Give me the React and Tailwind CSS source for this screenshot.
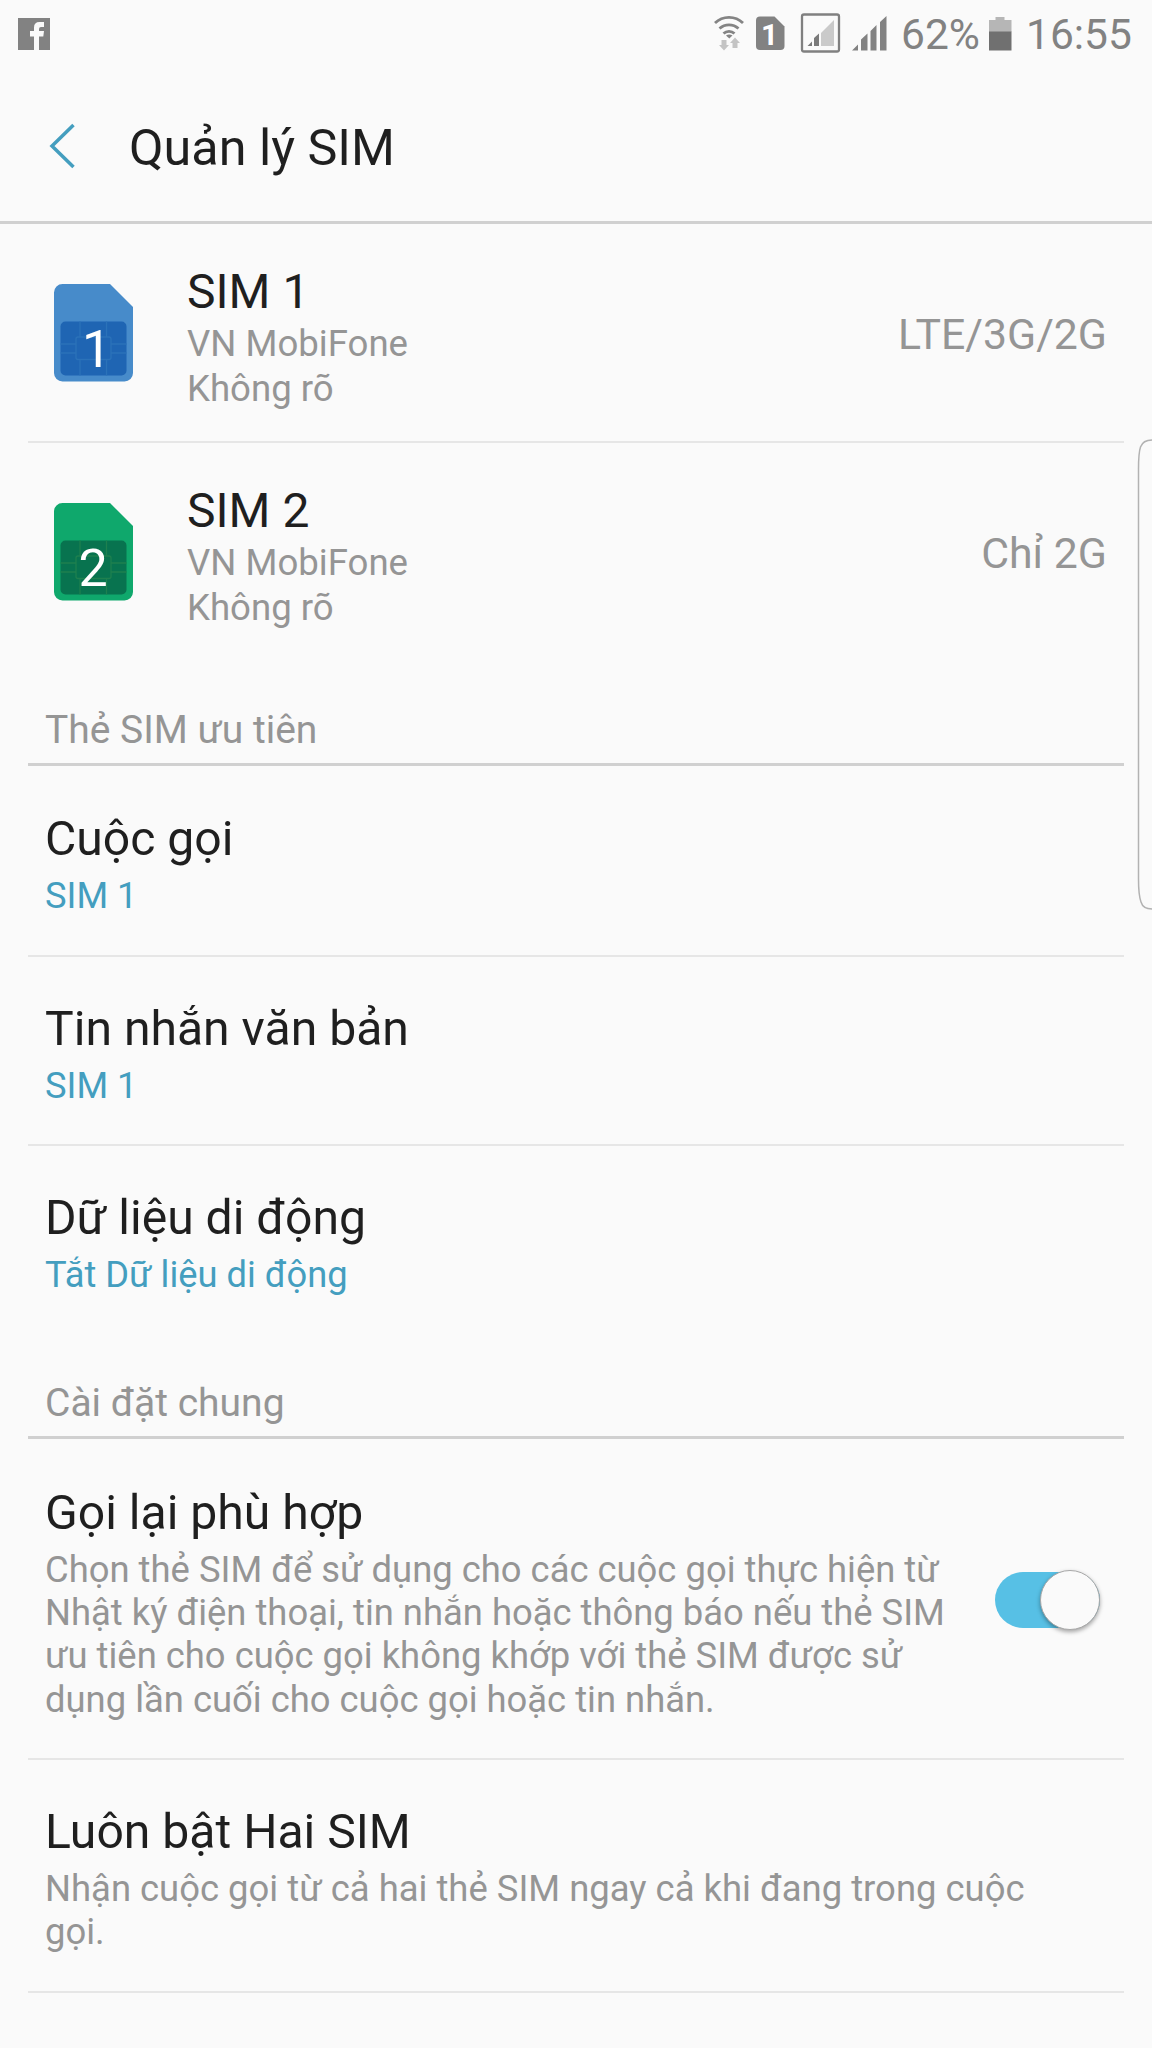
const Chip = ({ top, chip, line, n }) => (
  <svg width="80" height="98" viewBox="0 0 80 98">
    <path d="M8.500 0H56L79 23V89a8.500 8.500 0 0 1-8.500 8.500H8.500A8.500 8.500 0 0 1 0 89V8.500A8.500 8.500 0 0 1 8.500 0Z" fill={top} />
    <rect x="6.500" y="37.500" width="66" height="54" rx="5" fill={chip} />
    <g stroke={line} strokeWidth="1.300" fill="none">
      <path d="M26 37.500V53M52.500 37.500V53M26 75.500V91.500M52.500 75.500V91.500M6.500 60H22M6.500 69H22M57 60H72.500M57 69H72.500" />
      <rect x="22" y="53" width="35" height="22.500" rx="2" />
    </g>
    <text x={n === 1 ? 42.5 : 39} y="83" fontSize="52" fill="#fff" textAnchor="middle" className="font-['Roboto']">{n}</text>
  </svg>
)

const StatusIcons = () => (
  <svg width="182" height="60" viewBox="710 0 182 60" className="block">
    <g fill="none" stroke="#848484" strokeWidth="2.800">
      <path d="M715 23a20 20 0 0 1 28 0" />
      <path d="M719.500 28.500a14 14 0 0 1 19 0" />
      <path d="M723.500 33.500a8 8 0 0 1 11 0" />
    </g>
    <path d="M726 35.500q3-2 6.500 0l-3.200 3Z" fill="#848484" />
    <path d="M721.500 40h5v5h2.500l-5 5.500-5-5.500h2.500ZM732.500 48h5v-5h2.500l-5-5.500-5 5.500h2.500Z" fill="#c4c4c4" />
    <path d="M760 16.500h14.500l10 10V46a4 4 0 0 1-4 4H760a4 4 0 0 1-4-4V20.500a4 4 0 0 1 4-4Z" fill="#828282" />
    <text x="769.500" y="45" fontSize="30" fontWeight="700" fill="#fff" textAnchor="middle" className="font-['Roboto']">1</text>
    <rect x="802" y="14.500" width="37" height="37" rx="2" fill="none" stroke="#808080" strokeWidth="2.300" />
    <path d="M807.500 46l4.500-4.500V46ZM814 46v-8l5-4.500V46Z" fill="#7a7a7a" />
    <path d="M821 46V33l13-13v26Z" fill="#cacaca" />
    <path d="M852 50.500l6-6v6ZM861 50.500V39.500l6.500-6v17ZM870.500 50.500V31l6-6v25.500ZM880 50.500V22l6.500-6v34.500Z" fill="#828282" />
  </svg>
)

const preferred = [
  { title: 'Cuộc gọi', value: 'SIM 1' },
  { title: 'Tin nhắn văn bản', value: 'SIM 1' },
  { title: 'Dữ liệu di động', value: 'Tắt Dữ liệu di động' },
]

const sims = [
  { n: 1, type: 'LTE/3G/2G', top: '#478bca', chip: '#1f65b3', line: '#2b72b9' },
  { n: 2, type: 'Chỉ 2G', top: '#0fa86c', chip: '#08734f', line: '#1e804f' },
]

function SectionTitle({ children }) {
  return (
    <h2 className="mb-px h-[75px] border-b-3 border-[#d0d0d0] pl-[17px] text-[39px] leading-[78px] text-[#959595]">
      {children}
    </h2>
  )
}

export default function App() {
  return (
    <div className="relative h-[2048px] w-[1152px] overflow-hidden bg-[#fafafa] font-['Roboto',sans-serif] text-[#1f1f1f]">
      <div className="flex h-[67px] items-start justify-between pl-[18px] pr-[2px] text-[#828282]">
        <svg width="32" height="32" viewBox="0 0 32 32" className="mt-[18px]">
          <path d="M0 0h32v32H0Z" fill="#828282" />
          <path d="M16 32V18.500h-4V13h4V9.500Q16 4 21.500 4H26v5h-3q-2 0-2 2v2h5l-.7 5.500H21V32Z" fill="#fafafa" />
        </svg>
        <div className="flex">
          <StatusIcons />
          <span className="ml-[9px] w-[79px] whitespace-nowrap text-[42.500px] leading-[70px]">62%</span>
          <svg width="23" height="34" viewBox="0 0 23 34" className="ml-[9px] mt-[17px]">
            <path d="M0 3h6.500V0h9v3H22.500v12H0Z" fill="#b6b6b6" />
            <path d="M0 14.500h22.500v19H0Z" fill="#707070" />
          </svg>
          <span className="ml-[14px] w-[124px] whitespace-nowrap text-[42.500px] leading-[70px]">16:55</span>
        </div>
      </div>

      <header className="flex h-[157px] items-center border-b-3 border-[#d0d0d0] pl-[49px] pt-[3px]">
        <svg width="27" height="46" viewBox="0 0 27 46" fill="none" stroke="#449ebf" strokeWidth="3.500">
          <path d="M24.500 2L3 23L24.500 44" />
        </svg>
        <h1 className="ml-[53px] pt-[5px] text-[50.300px] leading-[60px]">Quản lý SIM</h1>
      </header>

      <main className="px-7">
        {sims.map((sim) => (
          <section
            key={sim.n}
            className="flex h-[219px] items-start border-b-2 border-[#e6e6e6] pl-[26px] pr-[17px] last-of-type:border-transparent"
          >
            <div className="mt-[60px] w-[133px]">
              <Chip {...sim} />
            </div>
            <div className="mt-[40px] flex-1 text-[36.600px] leading-[44.500px] text-[#959595]">
              <h3 className="mb-[2px] text-[48px] leading-[56px] text-[#1f1f1f]">SIM {sim.n}</h3>
              <p>VN MobiFone</p>
              <p>Không rõ</p>
            </div>
            <span className="mt-[85px] text-[42.800px] leading-[50px] text-[#959595]">{sim.type}</span>
          </section>
        ))}

        <div className="mt-[29px]">
          <SectionTitle>Thẻ SIM ưu tiên</SectionTitle>
        </div>
        {preferred.map((row, i) => (
          <div key={row.title} className={`h-[189.600px] pl-[17px] pt-[42px] ${i < 2 ? 'border-b-2 border-[#e6e6e6]' : ''}`}>
            <h3 className="text-[48.100px] leading-[60px]">{row.title}</h3>
            <p className="pt-[2px] text-[36.300px] leading-[50px] text-[#449ebf]">{row.value}</p>
          </div>
        ))}

        <div className="mt-[28.200px]">
          <SectionTitle>Cài đặt chung</SectionTitle>
        </div>
        <div className="flex h-[320px] border-b-2 border-[#e6e6e6] pl-[17px] pt-[43px]">
          <div className="w-[950px]">
            <h3 className="text-[48.100px] leading-[60px]">Gọi lại phù hợp</h3>
            <p className="whitespace-nowrap pt-[5px] text-[36.400px] leading-[43.200px] text-[#959595]">
              Chọn thẻ SIM để sử dụng cho các cuộc gọi thực hiện từ<br />
              Nhật ký điện thoại, tin nhắn hoặc thông báo nếu thẻ SIM<br />
              ưu tiên cho cuộc gọi không khớp với thẻ SIM được sử<br />
              dụng lần cuối cho cuộc gọi hoặc tin nhắn.
            </p>
          </div>
          <div className="mt-[89px] flex h-[56px] w-[105px] items-center justify-end rounded-full bg-[#57c0e5]">
            <span className="size-[60px] shrink-0 rounded-full border border-[#a8a8a8] bg-[#fafafa] shadow-[0_2px_4px_rgba(0,0,0,0.35)]" />
          </div>
        </div>
        <div className="h-[233px] border-b-2 border-[#e6e6e6] pl-[17px] pt-[42px]">
          <h3 className="text-[48.100px] leading-[60px]">Luôn bật Hai SIM</h3>
          <p className="whitespace-nowrap pt-[5px] text-[36.450px] leading-[43.200px] text-[#959595]">
            Nhận cuộc gọi từ cả hai thẻ SIM ngay cả khi đang trong cuộc<br />
            gọi.
          </p>
        </div>
      </main>

      {/* edge panel handle, cut off by the screen */}
      <svg width="16" height="472" viewBox="0 0 16 472" className="absolute right-0 top-[439px]" fill="none" stroke="#b2b2b2" strokeWidth="1.500">
        <path d="M16 1Q7 1 4.500 8Q2.500 14 2.500 30V440Q2.500 456 5 463Q7 470 16 470" />
      </svg>
    </div>
  )
}
